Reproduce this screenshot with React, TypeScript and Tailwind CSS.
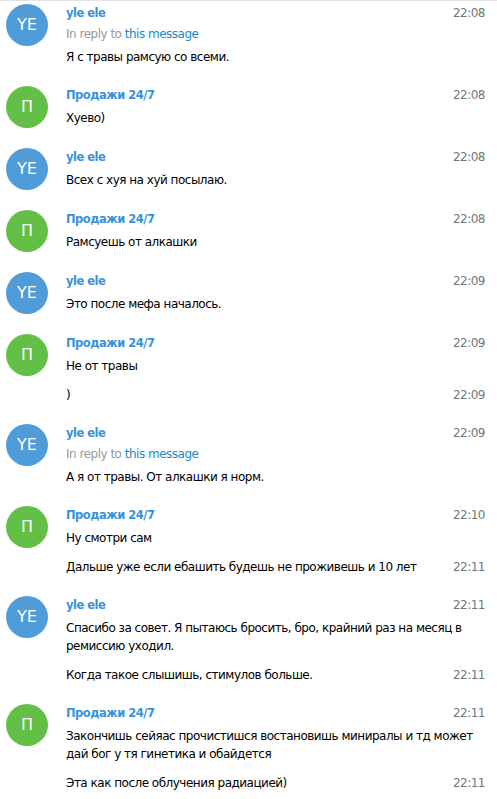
type Msg = {
  time: string;
  text: string;
  reply?: boolean;
};

type Group = {
  user: "ye" | "pr";
  msgs: Msg[];
};

const USERS = {
  ye: { name: "yle ele", initials: "YE", color: "bg-[#4f9cd9]" },
  pr: { name: "Продажи 24/7", initials: "П", color: "bg-[#64bf47]" },
};

const HISTORY: Group[] = [
  { user: "ye", msgs: [{ time: "22:08", text: "Я с травы рамсую со всеми.", reply: true }] },
  { user: "pr", msgs: [{ time: "22:08", text: "Хуево)" }] },
  { user: "ye", msgs: [{ time: "22:08", text: "Всех с хуя на хуй посылаю." }] },
  { user: "pr", msgs: [{ time: "22:08", text: "Рамсуешь от алкашки" }] },
  { user: "ye", msgs: [{ time: "22:09", text: "Это после мефа началось." }] },
  {
    user: "pr",
    msgs: [
      { time: "22:09", text: "Не от травы" },
      { time: "22:09", text: ")" },
    ],
  },
  { user: "ye", msgs: [{ time: "22:09", text: "А я от травы. От алкашки я норм.", reply: true }] },
  {
    user: "pr",
    msgs: [
      { time: "22:10", text: "Ну смотри сам" },
      { time: "22:11", text: "Дальше уже если ебашить будешь не проживешь и 10 лет" },
    ],
  },
  {
    user: "ye",
    msgs: [
      {
        time: "22:11",
        text: "Спасибо за совет. Я пытаюсь бросить, бро, крайний раз на месяц в ремиссию уходил.",
      },
      { time: "22:11", text: "Когда такое слышишь, стимулов больше." },
    ],
  },
  {
    user: "pr",
    msgs: [
      {
        time: "22:11",
        text: "Закончишь сейяас прочистишся востановишь минирaлы и тд может дай бог у тя гинетика и обайдется",
      },
      { time: "22:11", text: "Эта как после облучения радиацией)" },
    ],
  },
];

function Time({ value }: { value: string }) {
  return <div className="float-right text-[#70777b] leading-[18px]">{value}</div>;
}

function MessageGroup({ group }: { group: Group }) {
  const u = USERS[group.user];
  const [first, ...rest] = group.msgs;

  return (
    <div className="pb-[10px] pt-[10px] first:pt-[3px]">
      <div className="flex pl-[6px] pr-[12px]">
        <div
          className={`${u.color} w-[42px] h-[42px] rounded-full shrink-0 flex items-center justify-center text-white text-[16px] tracking-normal`}
        >
          {u.initials}
        </div>
        <div className="ml-[18px] flex-1 min-w-0">
          <div className="leading-[18px]">
            <Time value={first.time} />
            <span className="font-bold text-[#3892db] text-[11.5px]">{u.name}</span>
          </div>
          {first.reply && (
            <div className="leading-[18px] mt-[3px] text-[#999999]">
              In reply to <span className="text-[#168acd]">this message</span>
            </div>
          )}
          <div className="leading-[18px] mt-[5px] text-black">{first.text}</div>
          {rest.map((m, i) => (
            <div key={i} className="mt-[11px] leading-[18px] text-black">
              <Time value={m.time} />
              {m.text}
            </div>
          ))}
        </div>
      </div>
    </div>
  );
}

export default function App() {
  return (
    <div
      className="w-[497px] min-h-[799px] bg-white text-[12px] tracking-[-0.5px] border-t border-[#e5e5e5] overflow-hidden"
      style={{ fontFamily: '"DejaVu Sans", Verdana, sans-serif' }}
    >
      {HISTORY.map((g, i) => (
        <MessageGroup key={i} group={g} />
      ))}
    </div>
  );
}
